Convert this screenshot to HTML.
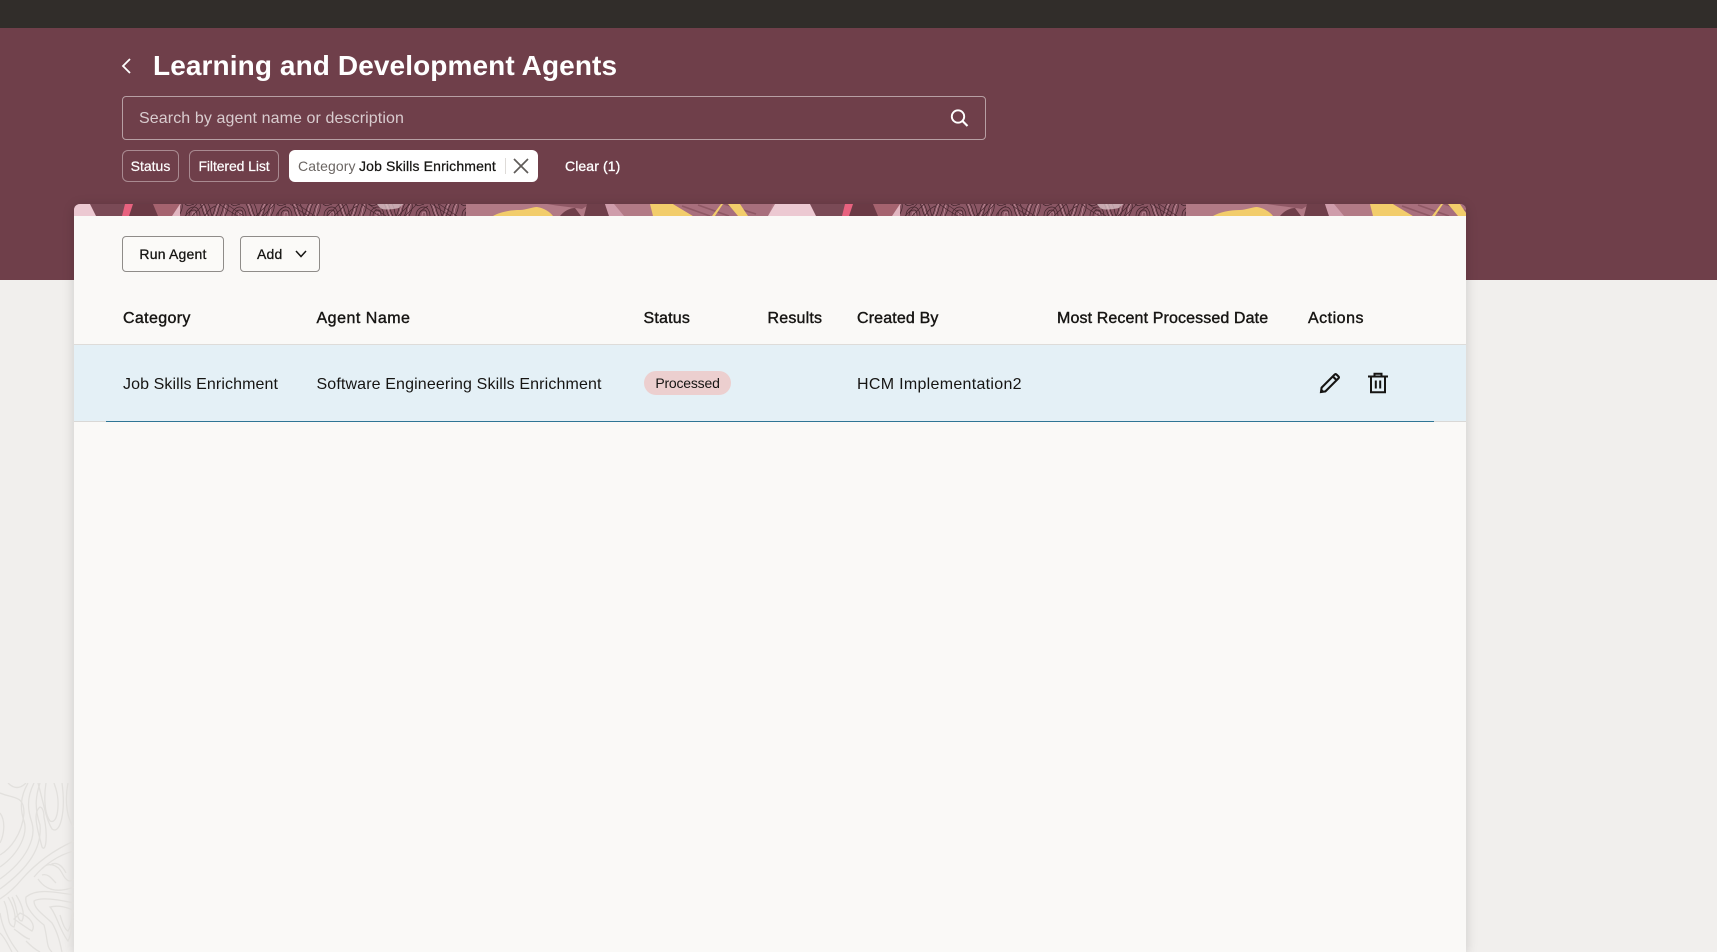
<!DOCTYPE html>
<html lang="en"><head><meta charset="utf-8"><title>Learning and Development Agents</title>
<style>
html,body{margin:0;padding:0;width:1717px;height:952px;overflow:hidden;background:#f1efed;font-family:"Liberation Sans",Arial,sans-serif;color:#161513;letter-spacing:.2px}
.a{position:absolute;white-space:nowrap}
.t{line-height:24px;height:24px;font-size:16px}
.h{-webkit-text-stroke:.4px #161513}
.chip{box-sizing:border-box;border:1px solid #a98a91;border-radius:6px;top:150px;height:32px;line-height:30px;text-align:center;color:#fff;font-size:14px;-webkit-text-stroke:.2px #fff}
.btn{box-sizing:border-box;border:1px solid #8f8c89;border-radius:4px;top:236px;height:36px;line-height:34px;font-size:14px;background:#fbfaf8;-webkit-text-stroke:.3px #161513}
</style></head><body>
<div class="a" style="left:0;top:0;width:1717px;height:28px;background:#312d2a"></div>
<div class="a" style="left:0;top:28px;width:1717px;height:252px;background:#6f3f4a"></div>

<svg class="a" style="left:120px;top:57px" width="14" height="18" viewBox="0 0 14 18"><path d="M10 2 L3 9 L10 16" fill="none" stroke="#fff" stroke-width="1.8"/></svg>
<div class="a" style="left:153px;top:46px;font-size:28px;line-height:40px;font-weight:bold;color:#fff;letter-spacing:.1px">Learning and Development Agents</div>

<div class="a" style="box-sizing:border-box;left:122px;top:96px;width:864px;height:44px;border:1px solid #b79fa4;border-radius:4px"></div>
<div class="a t" style="left:139px;top:107px;color:#d9cccf;letter-spacing:.1px">Search by agent name or description</div>
<svg class="a" style="left:949px;top:108px" width="20" height="20" viewBox="0 0 20 20"><circle cx="9" cy="8.5" r="6.2" fill="none" stroke="#fff" stroke-width="1.9"/><path d="M13.5 13 L18.5 18" stroke="#fff" stroke-width="2.1"/></svg>

<div class="a chip" style="left:122px;width:57px;letter-spacing:0">Status</div>
<div class="a chip" style="left:189px;width:90px;letter-spacing:-.1px">Filtered List</div>
<div class="a" style="left:289px;top:150px;width:249px;height:32px;background:#fff;border-radius:6px"></div>
<div class="a" style="left:298px;top:154px;font-size:14px;line-height:24px;color:#6b6663;letter-spacing:.1px">Category</div>
<div class="a" style="left:359px;top:154px;font-size:14px;line-height:24px;-webkit-text-stroke:.25px #161513;letter-spacing:.15px">Job Skills Enrichment</div>
<div class="a" style="left:505px;top:158px;width:1px;height:16px;background:#dedbd8"></div>
<svg class="a" style="left:512px;top:158px" width="18" height="16" viewBox="0 0 18 16"><path d="M2 1 L16 15 M16 1 L2 15" stroke="#5f5b59" stroke-width="1.7" fill="none"/></svg>
<div class="a" style="left:565px;top:154px;font-size:14px;line-height:24px;color:#fff;-webkit-text-stroke:.3px #fff;letter-spacing:.1px">Clear (1)</div>

<!-- card -->
<div class="a" style="left:74px;top:204px;width:1392px;height:748px;background:#faf9f7;border-radius:6px 6px 0 0;box-shadow:0 2px 12px rgba(0,0,0,.16)"></div>

<svg class="a" style="left:74px;top:204px;border-radius:6px 6px 0 0" width="1392" height="12" viewBox="0 0 1392 12">
<defs>
<pattern id="fp" width="46" height="12" patternUnits="userSpaceOnUse">
<rect width="46" height="12" fill="#8a5664"/>
<g fill="none" stroke="#3f2229" stroke-width=".7">
<path d="M0 12C3 8 2 3 5 0M4 12C7 8 6 3 9 0M8 12C11 8 10 3 13 0M13 12C15 8 17 4 16 0"/>
<path d="M20 12C20 6 24 3 28 3S34 8 34 12M23 12C23 8 25 6 28 6S31 9 31 12"/>
<path d="M34 0C37 4 36 8 39 12M38 0C41 4 40 8 43 12M42 0C45 4 44 8 46 12M19 0C22 3 25 1 28 0"/>
</g>
<g fill="none" stroke="#cf9eaa" stroke-width=".6">
<path d="M2 12C5 8 4 3 7 0M11 12C13 8 12 3 15 0M36 0C39 4 38 8 41 12M26 12C26 9 27 8 28 8S30 9 30 12"/>
</g>
</pattern>
<pattern id="fp2" width="71" height="12" patternUnits="userSpaceOnUse">
<g fill="none" stroke="#4a2730" stroke-width=".7">
<path d="M3 0C9 4 14 8 22 12M10 0C15 3 20 7 28 12M40 12C44 8 48 4 52 0M47 12C51 8 55 4 59 0M60 12C62 7 66 4 70 2"/>
</g>
</pattern>
<g id="per">
<rect width="720" height="12" fill="#7a4a56"/>
<path d="M0 0H16L22 12H0Z" fill="#ecc9d2"/>
<path d="M59 0H79L84 12H55Z" fill="#6a3a45"/>
<path d="M48 12L51 0H59L55 12Z" fill="#e8627f"/>
<path d="M79 0H106L98 12H84Z" fill="#a5636f"/>
<path d="M98 12L106 0H109V12Z" fill="#e2b6c1"/>
<rect x="106" width="286" height="12" fill="url(#fp)"/>
<rect x="106" width="286" height="12" fill="url(#fp2)"/>
<path d="M303 0H329L325 4C316 6 308 6 306 4Z" fill="#dcc5ca" opacity=".75"/>
<rect x="392" width="328" height="12" fill="#b27a86"/>
<path d="M473 0H516L508 5C496 3 484 2 473 0Z" fill="#8f5865"/>
<path d="M419 12C426 8 436 6 446 6C452 6 458 3 463 3C470 4 476 8 479 12Z" fill="#f2cd6b"/>
<path d="M486 12C490 7 496 4 501 4L507 12Z" fill="#6f3f4a"/>
<path d="M513 0H531L535 12H510Z" fill="#6f3f4a"/>
<path d="M531 0H540L550 12H535Z" fill="#cf9dab"/>
<path d="M576 0H599L619 12H579Z" fill="#f2cd6b"/>
<path d="M599 0H699L694 12H619Z" fill="#a86f7d"/>
<g stroke="#8f5865" stroke-width="1.6"><path d="M608 2L636 12M624 1L655 12M650 0L682 10"/></g>
<path d="M638 12L647 0H649L641 12Z" fill="#f2cd6b"/>
<path d="M654 0H666L674 12H664Z" fill="#f2cd6b"/>
<path d="M694 12L701 0H720V12Z" fill="#ecc9d2"/>
</g>
</defs>
<use href="#per" x="0"/>
<use href="#per" x="720"/>
</svg>

<div class="a btn" style="left:122px;width:102px;text-align:center">Run Agent</div>
<div class="a btn" style="left:240px;width:80px;padding-left:16px">Add</div>
<svg class="a" style="left:294px;top:249px" width="14" height="10" viewBox="0 0 14 10"><path d="M2 2 L7 7.5 L12 2" fill="none" stroke="#161513" stroke-width="1.5"/></svg>

<div class="a t h" style="left:123px;top:307px;letter-spacing:.35px">Category</div>
<div class="a t h" style="left:316.5px;top:307px;letter-spacing:.5px">Agent Name</div>
<div class="a t h" style="left:643.5px;top:307px">Status</div>
<div class="a t h" style="left:767.5px;top:307px">Results</div>
<div class="a t h" style="left:857px;top:307px;letter-spacing:.15px">Created By</div>
<div class="a t h" style="left:1057px;top:307px;letter-spacing:.12px">Most Recent Processed Date</div>
<div class="a t h" style="left:1308px;top:307px;letter-spacing:.5px">Actions</div>

<div class="a" style="box-sizing:border-box;left:74px;top:344px;width:1392px;height:78px;background:#e4f0f6;border-top:1px solid #dedcd9;border-bottom:1px solid #d9d8d6"></div>
<div class="a" style="left:106px;top:421px;width:1328px;height:1px;background:#2f7595"></div>

<div class="a t" style="left:123px;top:373px;letter-spacing:.1px">Job Skills Enrichment</div>
<div class="a t" style="left:316.5px;top:373px;letter-spacing:.13px">Software Engineering Skills Enrichment</div>
<div class="a" style="left:644px;top:371px;width:87px;height:24px;line-height:24px;background:#eccfcf;border-radius:12px;text-align:center;font-size:14px;letter-spacing:-.2px">Processed</div>
<div class="a t" style="left:857px;top:373px;letter-spacing:.3px">HCM Implementation2</div>

<svg class="a" style="left:1319px;top:372px" width="22" height="22" viewBox="0 0 22 22"><path d="M2 20 L2.6 15.6 L15.6 2.6 Q16.6 1.6 17.6 2.6 L19.4 4.4 Q20.4 5.4 19.4 6.4 L6.4 19.4 Z M14 4.6 L17.4 8" fill="none" stroke="#161513" stroke-width="2.1"/><path d="M1.5 20.5 L2.3 16.5 L5.5 19.7 Z" fill="#161513"/></svg>
<svg class="a" style="left:1367px;top:372px" width="22" height="22" viewBox="0 0 22 22"><path d="M1 4.5 H21 M7.5 4 V1.8 H14.5 V4 M4 4.5 V20.2 H18 V4.5 M8.8 8.5 V16.5 M13.2 8.5 V16.5" fill="none" stroke="#161513" stroke-width="2"/></svg>

<!-- bottom-left contour pattern -->
<svg class="a" style="left:0;top:783px" width="74" height="169" viewBox="0 0 74 169">
<g fill="none" stroke="#e2e0dd" stroke-width="1.3">
<path d="M8 0C14 6 20 6 26 0"/>
<path d="M0 10C14 16 24 12 24 30C22 52 10 66 0 72"/>
<path d="M0 30C6 38 4 52 0 60"/>
<path d="M28 0C20 14 20 26 24 38C28 50 20 70 0 84"/>
<path d="M34 0C26 16 28 28 32 40C36 54 28 76 0 96"/>
<path d="M40 0C36 12 34 24 40 42C42 64 30 84 0 106"/>
<path d="M40 24C32 30 38 48 42 64C46 70 48 52 44 34C44 28 42 24 40 24Z"/>
<path d="M46 0C44 12 44 30 50 38C58 42 60 20 56 6L54 0"/>
<path d="M38 0C44 22 46 36 52 46C60 52 66 30 62 0"/>
<path d="M68 0C64 20 68 38 74 44"/>
<path d="M74 58C56 66 38 78 22 96C14 106 6 112 0 116"/>
<path d="M74 68C58 72 44 82 34 94"/>
<path d="M38 96C46 108 58 110 74 104"/>
<path d="M42 86C48 78 58 82 62 90C66 98 70 100 74 96"/>
<path d="M50 82C56 78 62 82 66 90"/>
<path d="M42 92C48 90 52 96 56 100"/>
<path d="M74 112C50 108 36 106 26 114C24 124 36 136 44 142C48 156 46 164 52 169"/>
<path d="M74 120C56 116 40 114 34 118C34 126 44 132 52 140C58 150 60 160 62 169"/>
<path d="M50 124C56 130 60 148 68 158C74 146 70 132 74 128C68 124 58 122 50 124Z"/>
<path d="M60 132C62 138 64 146 68 148C72 142 70 136 74 134"/>
<path d="M4 118C10 130 6 142 14 144C18 134 12 120 8 114"/>
<path d="M12 114C18 124 16 138 22 138C26 130 20 118 16 112"/>
<path d="M14 136C20 140 28 146 32 148C36 142 30 134 20 130Z"/>
<path d="M14 146C20 150 26 156 30 156"/>
<path d="M0 130C2 144 8 156 18 169"/>
<path d="M0 150C6 156 8 162 12 169"/>
<path d="M26 158C30 162 34 166 40 169"/>
</g>
</svg>
</body></html>
